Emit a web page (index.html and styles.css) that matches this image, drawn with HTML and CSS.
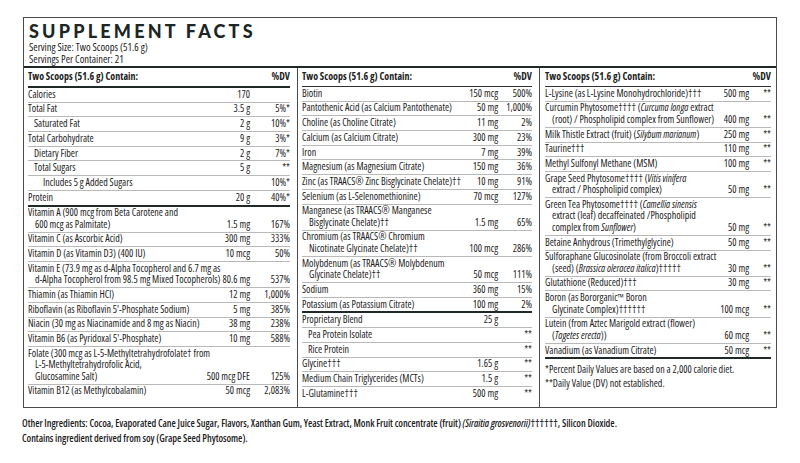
FILE: index.html
```html
<!DOCTYPE html>
<html lang="en">
<head>
    <meta charset="UTF-8">
    <title>Supplement Facts</title>
    <link rel="stylesheet" href="styles.css">
</head>
<body>
    <div class="label">
        <div class="top">
            <h1 class="title">SUPPLEMENT FACTS</h1>
            <p>Serving Size: Two Scoops (51.6 g)</p>
            <p>Servings Per Container: 21</p>
        </div>
        <div class="cols">
            <div class="col c1">
                <div class="row ln hd"><span class="nm">Two Scoops (51.6 g) Contain:</span><span class="dv">%DV</span></div>
                <div class="row ln"><span class="nm">Calories</span><span class="amt">170</span><span class="dv"></span></div>
                <div class="row ln"><span class="nm">Total Fat</span><span class="amt">3.5 g</span><span class="dv">5%*</span></div>
                <div class="row ln"><span class="nm i1">Saturated Fat</span><span class="amt">2 g</span><span class="dv">10%*</span></div>
                <div class="row ln"><span class="nm">Total Carbohydrate</span><span class="amt">9 g</span><span class="dv">3%*</span></div>
                <div class="row ln"><span class="nm i1">Dietary Fiber</span><span class="amt">2 g</span><span class="dv">7%*</span></div>
                <div class="row ln"><span class="nm i1">Total Sugars</span><span class="amt">5 g</span><span class="dv">**</span></div>
                <div class="row ln"><span class="nm i2">Includes 5 g Added Sugars</span><span class="amt"></span><span class="dv">10%*</span></div>
                <div class="row ln thick"><span class="nm">Protein</span><span class="amt">20 g</span><span class="dv">40%*</span></div>
                <div class="row">
                    <p>Vitamin A (900 mcg from Beta Carotene and</p>
                    <div class="ln"><span class="nm cont">600 mcg as Palmitate)</span><span class="amt">1.5 mg</span><span class="dv">167%</span></div>
                </div>
                <div class="row ln"><span class="nm">Vitamin C (as Ascorbic Acid)</span><span class="amt">300 mg</span><span class="dv">333%</span></div>
                <div class="row ln"><span class="nm">Vitamin D (as Vitamin D3) (400 IU)</span><span class="amt">10 mcg</span><span class="dv">50%</span></div>
                <div class="row">
                    <p>Vitamin E (73.9 mg as d-Alpha Tocopherol and 6.7 mg as</p>
                    <div class="ln"><span class="nm cont">d-Alpha Tocopherol from 98.5 mg Mixed Tocopherols)</span><span class="amt">80.6 mg</span><span class="dv">537%</span></div>
                </div>
                <div class="row ln"><span class="nm">Thiamin (as Thiamin HCl)</span><span class="amt">12 mg</span><span class="dv">1,000%</span></div>
                <div class="row ln"><span class="nm">Riboflavin (as Riboflavin 5'-Phosphate Sodium)</span><span class="amt">5 mg</span><span class="dv">385%</span></div>
                <div class="row ln"><span class="nm">Niacin (30 mg as Niacinamide and 8 mg as Niacin)</span><span class="amt">38 mg</span><span class="dv">238%</span></div>
                <div class="row ln"><span class="nm">Vitamin B6 (as Pyridoxal 5'-Phosphate)</span><span class="amt">10 mg</span><span class="dv">588%</span></div>
                <div class="row">
                    <p>Folate (300 mcg as L-5-Methyltetrahydrofolate† from</p>
                    <p class="cont">L-5-Methyltetrahydrofolic Acid,</p>
                    <div class="ln"><span class="nm cont">Glucosamine Salt)</span><span class="amt">500 mcg DFE</span><span class="dv">125%</span></div>
                </div>
                <div class="row ln"><span class="nm">Vitamin B12 (as Methylcobalamin)</span><span class="amt">50 mcg</span><span class="dv">2,083%</span></div>
            </div>
            <div class="col c2">
                <div class="row ln hd"><span class="nm">Two Scoops (51.6 g) Contain:</span><span class="dv">%DV</span></div>
                <div class="row ln"><span class="nm">Biotin</span><span class="amt">150 mcg</span><span class="dv">500%</span></div>
                <div class="row ln"><span class="nm">Pantothenic Acid (as Calcium Pantothenate)</span><span class="amt">50 mg</span><span class="dv">1,000%</span></div>
                <div class="row ln"><span class="nm">Choline (as Choline Citrate)</span><span class="amt">11 mg</span><span class="dv">2%</span></div>
                <div class="row ln"><span class="nm">Calcium (as Calcium Citrate)</span><span class="amt">300 mg</span><span class="dv">23%</span></div>
                <div class="row ln"><span class="nm">Iron</span><span class="amt">7 mg</span><span class="dv">39%</span></div>
                <div class="row ln"><span class="nm">Magnesium (as Magnesium Citrate)</span><span class="amt">150 mg</span><span class="dv">36%</span></div>
                <div class="row ln"><span class="nm">Zinc (as TRAACS® Zinc Bisglycinate Chelate)††</span><span class="amt">10 mg</span><span class="dv">91%</span></div>
                <div class="row ln"><span class="nm">Selenium (as L-Selenomethionine)</span><span class="amt">70 mcg</span><span class="dv">127%</span></div>
                <div class="row">
                    <p>Manganese (as TRAACS® Manganese</p>
                    <div class="ln"><span class="nm cont">Bisglycinate Chelate)††</span><span class="amt">1.5 mg</span><span class="dv">65%</span></div>
                </div>
                <div class="row">
                    <p>Chromium (as TRAACS® Chromium</p>
                    <div class="ln"><span class="nm cont">Nicotinate Glycinate Chelate)††</span><span class="amt">100 mcg</span><span class="dv">286%</span></div>
                </div>
                <div class="row">
                    <p>Molybdenum (as TRAACS® Molybdenum</p>
                    <div class="ln"><span class="nm cont">Glycinate Chelate)††</span><span class="amt">50 mcg</span><span class="dv">111%</span></div>
                </div>
                <div class="row ln"><span class="nm">Sodium</span><span class="amt">360 mg</span><span class="dv">15%</span></div>
                <div class="row ln thick"><span class="nm">Potassium (as Potassium Citrate)</span><span class="amt">100 mg</span><span class="dv">2%</span></div>
                <div class="row ln"><span class="nm">Proprietary Blend</span><span class="amt">25 g</span><span class="dv"></span></div>
                <div class="row ln"><span class="nm i1">Pea Protein Isolate</span><span class="amt"></span><span class="dv">**</span></div>
                <div class="row ln"><span class="nm i1">Rice Protein</span><span class="amt"></span><span class="dv">**</span></div>
                <div class="row ln"><span class="nm">Glycine†††</span><span class="amt">1.65 g</span><span class="dv">**</span></div>
                <div class="row ln"><span class="nm">Medium Chain Triglycerides (MCTs)</span><span class="amt">1.5 g</span><span class="dv">**</span></div>
                <div class="row ln"><span class="nm">L-Glutamine†††</span><span class="amt">500 mg</span><span class="dv">**</span></div>
            </div>
            <div class="col c3">
                <div class="row ln hd"><span class="nm">Two Scoops (51.6 g) Contain:</span><span class="dv">%DV</span></div>
                <div class="row ln"><span class="nm">L-Lysine (as L-Lysine Monohydrochloride)†††</span><span class="amt">500 mg</span><span class="dv">**</span></div>
                <div class="row">
                    <p>Curcumin Phytosome†††† (<i>Curcuma longa</i> extract</p>
                    <div class="ln"><span class="nm cont">(root) / Phospholipid complex from Sunflower)</span><span class="amt">400 mg</span><span class="dv">**</span></div>
                </div>
                <div class="row ln"><span class="nm">Milk Thistle Extract (fruit) (<i>Silybum marianum</i>)</span><span class="amt">250 mg</span><span class="dv">**</span></div>
                <div class="row ln"><span class="nm">Taurine†††</span><span class="amt">110 mg</span><span class="dv">**</span></div>
                <div class="row ln"><span class="nm">Methyl Sulfonyl Methane (MSM)</span><span class="amt">100 mg</span><span class="dv">**</span></div>
                <div class="row">
                    <p>Grape Seed Phytosome†††† (<i>Vitis vinifera</i></p>
                    <div class="ln"><span class="nm cont">extract / Phospholipid complex)</span><span class="amt">50 mg</span><span class="dv">**</span></div>
                </div>
                <div class="row">
                    <p>Green Tea Phytosome†††† (<i>Camellia sinensis</i></p>
                    <p class="cont">extract (leaf) decaffeinated /Phospholipid</p>
                    <div class="ln"><span class="nm cont">complex from <i>Sunflower</i>)</span><span class="amt">50 mg</span><span class="dv">**</span></div>
                </div>
                <div class="row ln"><span class="nm">Betaine Anhydrous (Trimethylglycine)</span><span class="amt">50 mg</span><span class="dv">**</span></div>
                <div class="row">
                    <p>Sulforaphane Glucosinolate (from Broccoli extract</p>
                    <div class="ln"><span class="nm cont">(seed) (<i>Brassica oleracea italica</i>)†††††</span><span class="amt">30 mg</span><span class="dv">**</span></div>
                </div>
                <div class="row ln"><span class="nm">Glutathione (Reduced)†††</span><span class="amt">30 mg</span><span class="dv">**</span></div>
                <div class="row">
                    <p>Boron (as Bororganic™ Boron</p>
                    <div class="ln"><span class="nm cont">Glycinate Complex)††††††</span><span class="amt">100 mcg</span><span class="dv">**</span></div>
                </div>
                <div class="row">
                    <p>Lutein (from Aztec Marigold extract (flower)</p>
                    <div class="ln"><span class="nm cont">(<i>Tagetes erecta</i>))</span><span class="amt">60 mcg</span><span class="dv">**</span></div>
                </div>
                <div class="row ln thick"><span class="nm">Vanadium (as Vanadium Citrate)</span><span class="amt">50 mcg</span><span class="dv">**</span></div>
                <div class="notes">
                    <p>*Percent Daily Values are based on a 2,000 calorie diet.</p>
                    <p>**Daily Value (DV) not established.</p>
                </div>
            </div>
        </div>
    </div>
    <div class="other">
        <p>Other Ingredients: Cocoa, Evaporated Cane Juice Sugar, Flavors, Xanthan Gum, Yeast Extract, Monk Fruit concentrate (fruit) <i>(Siraitia grosvenorii)</i>††††††, Silicon Dioxide.</p>
        <p>Contains ingredient derived from soy (Grape Seed Phytosome).</p>
    </div>
</body>
</html>
```

FILE: styles.css
```css
body {
    margin: 0;
    background: #fff;
    color: #222;
    font-family: "Open Sans", "Liberation Sans", sans-serif;
    font-stretch: 75%;
    font-weight: 500;
    font-size: 10px;
}
p {
    margin: 0;
}
.label {
    margin: 17px 0 0 23px;
    width: 752px;
    border: 1px solid #4a4a4a;
}
.top {
    padding: 3px 5px 1px;
    border-bottom: 2px solid #1f2a28;
    font-size: 10.5px;
    line-height: 12px;
}
.title {
    margin: 0;
    font-family: Lato, "Liberation Sans", sans-serif;
    font-stretch: normal;
    font-weight: 900;
    font-size: 18px;
    line-height: 20px;
    letter-spacing: 3.2px;
    color: #1c2624;
}
.cols {
    display: grid;
    grid-template-columns: 273px 242px minmax(0, 1fr);
}
.col {
    min-width: 0;
    padding: 0 7px 6px 4px;
}
.col + .col {
    border-left: 1px solid #4a4a4a;
}
.c3 {
    padding: 0 5px 6px 5px;
}
.row {
    line-height: 11.5px;
    padding: 0.8px 0 1.4px;
    border-bottom: 1px solid #b9b9b9;
    white-space: nowrap;
}
.ln {
    display: flex;
    align-items: flex-end;
}
.col > .row:last-child {
    border-bottom: none;
}
.row.thick {
    border-bottom: 2px solid #1f2a28;
}
.row.hd {
    font-weight: 700;
    padding: 3px 0 3.5px;
    border-bottom: 1px solid #333;
}
.c1 .row.hd {
    border-bottom: 2px solid #1f2a28;
}
.nm {
    flex: 1;
    min-width: 0;
}
.cont {
    padding-left: 7px;
}
.nm.i1 {
    padding-left: 6px;
}
.nm.i2 {
    padding-left: 15px;
}
.amt {
    flex: none;
    text-align: right;
}
.dv {
    flex: none;
    text-align: right;
}
.c1 .dv {
    width: 40px;
}
.c2 .dv {
    width: 34px;
}
.c3 .dv {
    width: 22px;
}
.notes {
    padding-top: 3px;
    line-height: 14px;
}
.other {
    margin: 8px 0 0 22px;
    font-size: 10px;
    line-height: 15px;
    font-weight: 600;
    letter-spacing: -0.06px;
    color: #1e1e1e;
}
```
